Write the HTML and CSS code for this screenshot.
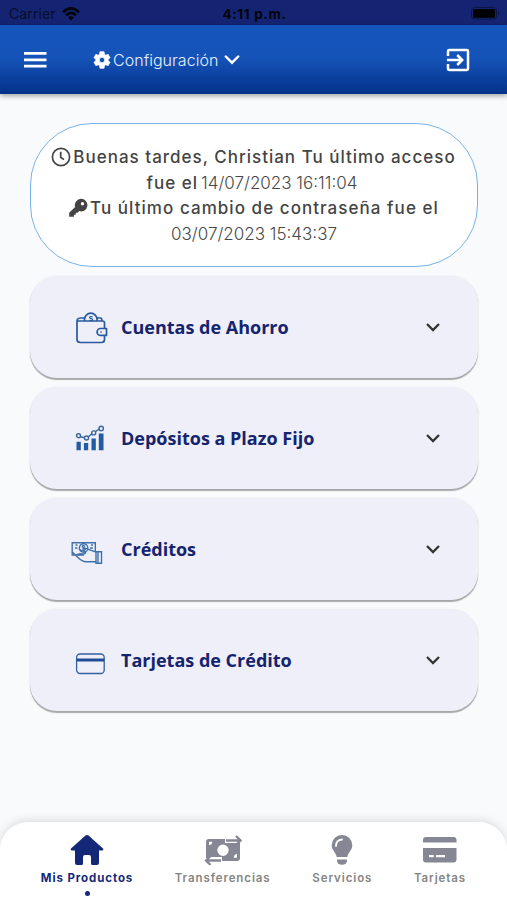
FILE: index.html
```html
<!DOCTYPE html>
<html lang="es">
<head>
<meta charset="utf-8">
<meta name="viewport" content="width=device-width, initial-scale=1">
<title>Mis Productos</title>
<link rel="stylesheet" href="styles.css">
</head>
<body>
<div class="app">
  <div class="status">
    <div class="carrier"><span>Carrier</span>
      <svg width="18" height="14" viewBox="0 0 18 14" fill="none" stroke="#02030a" stroke-width="2.6"><path d="M1 5.2Q9-2.6 17 5.2M4 8.2q5-4.6 10 0"/><path d="M9 13.4 6 10.4q3-2.4 6 0z" fill="#02030a" stroke="none"/></svg>
    </div>
    <span class="time">4:11 p.m.</span>
    <svg class="battery" width="29" height="13" viewBox="0 0 29 13"><rect x=".5" y=".5" width="25" height="11.5" rx="3" fill="none" stroke="#0b1545"/><rect x="2" y="2" width="22" height="8.8" rx="1.5" fill="#000"/><path d="M27 4q2 2.300 0 4.500z" fill="#0b1545"/></svg>
  </div>

  <header class="topbar">
    <svg class="menu" width="23" height="16" viewBox="0 0 23 16" fill="#fff"><path d="M0 0h22.500v2.800H0zM0 6.400h22.500v2.800H0zM0 12.800h22.500v2.800H0z"/></svg>
    <div class="config">
      <svg width="20" height="20" viewBox="0 0 24 24" fill="#fff"><path d="M19.400 13a7.500 7.500 0 0 0 0-2l2.300-1.700-2.400-4.200-2.700 1.100a7.500 7.500 0 0 0-1.700-1L14.500 2h-5l-.4 3.200a7.500 7.500 0 0 0-1.700 1L4.700 5.100 2.300 9.300 4.600 11a7.500 7.500 0 0 0 0 2l-2.300 1.700 2.400 4.200 2.700-1.100a7.500 7.500 0 0 0 1.700 1l.4 3.200h5l.4-3.200a7.500 7.500 0 0 0 1.700-1l2.700 1.100 2.400-4.200zM12 15.200a3.200 3.200 0 1 1 0-6.400 3.200 3.200 0 0 1 0 6.400z" fill-rule="evenodd" stroke="#fff" stroke-width=".8" stroke-linejoin="round"/></svg>
      <span class="config-label">Configuración</span>
      <svg width="16" height="10" viewBox="0 0 16 10" fill="none" stroke="#fff" stroke-width="2.400" stroke-linecap="round"><path d="m1.800 1.500 6.200 6.200 6.200-6.200"/></svg>
    </div>
    <svg class="exit" width="24" height="24" viewBox="0 0 24 24" fill="none" stroke="#fff" stroke-width="2.500"><path d="M2 8V3.200Q2 2 3.200 2h17.600Q22 2 22 3.200v17.600q0 1.200-1.200 1.200H3.200Q2 22 2 20.800V16M1 12h15M11.200 7l5 5-5 5"/></svg>
  </header>

  <main>
    <section class="greeting">
      <p><svg width="20" height="20" viewBox="0 0 20 20" fill="none" stroke="#444" stroke-width="1.700"><circle cx="10" cy="10" r="8.600"/><path d="M9.700 4.800v5.500l3.300 2.300"/></svg><b class="g1">Buenas tardes, Christian Tu último acceso</b></p>
      <p><b class="g2">fue el</b><span class="date d1">14/07/2023 16:11:04</span></p>
      <p><svg width="20" height="20" viewBox="0 0 20 20"><path fill="#444" fill-rule="evenodd" d="M13 .8a6.300 6.300 0 1 1-1.800 12.300l-1.500 1.600H7.800v2H5.900v2H1.200v-3.900l5.900-5.900A6.300 6.300 0 0 1 13 .8zm1.500 3.200a1.700 1.700 0 1 0 0 3.400 1.700 1.700 0 0 0 0-3.400z"/></svg><b class="g3">Tu último cambio de contraseña fue el</b></p>
      <p><span class="date d2">03/07/2023 15:43:37</span></p>
    </section>

    <section class="product">
      <svg class="picon" width="34" height="34" viewBox="0 -1 34 34" fill="none" stroke="#285a9e" stroke-width="1.700" stroke-linejoin="round"><path d="M29.500 17.500V12q0-2-2-2h-24M3.500 10Q1.500 9.500 2.500 8.200q1-1.200 3-1.200h4M2 9.500v19Q2 31.500 5.500 31.500h21q3 0 3-3v-4M22 7h3.500q1.500 0 1.500 3"/><path d="M9.500 10V8.500a6.300 6.300 0 0 1 12.600 0V10"/><path d="M31.500 17.500h-6a3.400 3.400 0 0 0 0 6.800h6z"/><path d="M25.500 21h1" stroke-width="1.800"/><path d="M17.600 5.900q-3-1-3 .6 0 1 1.500 1.200t1.500 1.100q0 1.400-3.200.5" stroke-width="1.200"/></svg>
      <h2 class="t1">Cuentas de Ahorro</h2>
      <svg class="chev" viewBox="0 0 16 10"><path d="m2 2 6 6 6-6"/></svg>
    </section>
    <section class="product">
      <svg class="picon" width="34" height="34" viewBox="0 0 34 34" fill="#245aa0"><path d="M1.500 20.700h4.300v8.500H1.500zM8.900 22h4.300v7.200H8.900zM16.500 17.500h4.300v11.700h-4.300zM23.800 12.500h4.700v16.700h-4.700z"/><g fill="none" stroke="#3a669f" stroke-width="1.400"><path d="m5.200 15.700 4.600 1.100M13.200 16l4.100-3.600M20.300 10.700l4-2.700"/><circle cx="3.500" cy="14.700" r="2"/><circle cx="11.500" cy="17" r="2"/><circle cx="18.700" cy="11.900" r="2"/><circle cx="26.200" cy="7.500" r="2.200"/></g></svg>
      <h2 class="t2">Depósitos a Plazo Fijo</h2>
      <svg class="chev" viewBox="0 0 16 10"><path d="m2 2 6 6 6-6"/></svg>
    </section>
    <section class="product">
      <svg class="picon picon-hand" width="34" height="34" viewBox="0 -2 34 34" fill="none" stroke="#4070ac" stroke-width="1.400"><path d="M14 21H2.200V8.700h23.100v9.500M2.200 18l5.500 5.300q4.600 4.500 8.300 4.500h10.200M6 21l4-1.300q4 .8 5.300-.5 1-1.200-1.300-2.200-3.500 0-5-2M26.200 18.200l-8-2.700q-3-2.500-5.500-.5"/><circle cx="13.600" cy="14" r="4.200"/><path d="M15.200 12.200q-2.800-1-2.800.5 0 1 1.500 1.200t1.500 1.200q0 1.300-3 .6M5 14h2.500M20 14h3M5.500 11h2M21 11h2" stroke-width="1.500"/><path d="M26 17.800h5.500v11.500H26zM28 18v11"/></svg>
      <h2 class="t3">Créditos</h2>
      <svg class="chev" viewBox="0 0 16 10"><path d="m2 2 6 6 6-6"/></svg>
    </section>
    <section class="product">
      <svg class="picon" width="34" height="34" viewBox="0 -2 34 34" fill="none" stroke="#31609f" stroke-width="1.300"><rect x="1.600" y="9" width="27.600" height="19.500" rx="3.500"/><path d="M2 15h27.200" stroke="#1d4b96" stroke-width="3"/></svg>
      <h2 class="t4">Tarjetas de Crédito</h2>
      <svg class="chev" viewBox="0 0 16 10"><path d="m2 2 6 6 6-6"/></svg>
    </section>
  </main>

  <nav class="tabs">
    <a class="tab tab-home">
      <svg width="34" height="30" viewBox="0 0 34 30" fill="#142878"><path d="M15.500.6q1.500-1.100 3 0L33 13.500q1 1.500-1 2h-3V28q0 2-2 2h-4.500q-1.500 0-1.500-1.500V22q0-2-2-2h-4q-2 0-2 2v6.500q0 1.500-1.500 1.500H7q-2 0-2-2V15.500H2q-2-.5-1-2z"/></svg>
      <span>Mis Productos</span><i class="dot"></i>
    </a>
    <a class="tab tab-transfer">
      <svg width="38" height="30" viewBox="0 0 38 30"><path fill="#858795" fill-rule="evenodd" d="M5 4h16v4h11.500V7.500H36V23q0 3-3 3H18v-4H6l-.5 1H2V7q0-3 3-3zm14 5.500a5.700 5.700 0 1 0 0 11.400 5.700 5.700 0 0 0 0-11.400zM5 6.800v3.400Q8 10 8.300 6.800zM33 19q-3 .2-3.300 3.800H33z"/><path d="M22 5.500h13M17 25.500H3" fill="none" stroke="#fff" stroke-width="5"/><path d="M22 5.500h14M32 1l4.500 4.500L32 10M17 25.500H2M6.500 21 2 25.500 6.500 30" fill="none" stroke="#858795" stroke-width="2.300"/></svg>
      <span>Transferencias</span>
    </a>
    <a class="tab tab-services">
      <svg width="22" height="30" viewBox="0 0 22 30"><path fill="#858795" d="M11 0a10.200 10.200 0 0 1 10.300 10.300c0 4.700-4 7-5 11.700H5.700c-1-4.700-5-7-5-11.700A10.200 10.200 0 0 1 11 0zM6 24.500h10v1.800q-1 3.500-5 3.500t-5-3.500z"/><path d="M5 11q0-6 6-6.500" fill="none" stroke="#fff" stroke-width="1.800" stroke-linecap="round"/></svg>
      <span>Servicios</span>
    </a>
    <a class="tab tab-cards">
      <svg width="34" height="30" viewBox="0 0 34 30"><path fill="#858795" fill-rule="evenodd" d="M0 7.500V5q0-3 3-3h27.500q3 0 3 3v2.500zM0 13h33.500v11.500q0 3-3 3H3q-3 0-3-3zm6 7v2.200h4.700V20zm7 0v2.200h9V20z"/></svg>
      <span>Tarjetas</span>
    </a>
  </nav>
</div>
</body>
</html>
```
FILE: styles.css
```css
* { box-sizing: border-box; }
body { margin: 0; font-family: Inter, sans-serif; }
.app { width: 507px; height: 900px; display: flex; flex-direction: column; background: #f8fafc; overflow: hidden; }
svg { display: block; flex: none; }

.status { height: 25px; background: #142472; display: grid; grid-template-columns: 1fr auto 1fr; align-items: center; padding: 2px 7px 0 9px; font: 14px Inter, sans-serif; color: #080d2c; }
.carrier { display: flex; align-items: center; gap: 6px; letter-spacing: .1px; }
.time { font-weight: 700; font-size: 13.5px; letter-spacing: .65px; color: #02030a; }
.battery { justify-self: end; }

.topbar { height: 69px; flex: none; display: flex; align-items: center; padding: 0 37px 0 24px; background: linear-gradient(#1555bd 0%, #1553b8 48%, #04318a 100%); box-shadow: 0 2px 5px rgba(0,0,0,.35); z-index: 1; }
.config { display: flex; align-items: center; margin-left: 45px; color: #e7efff; }
.config-label { font: 300 16px Inter, sans-serif; margin: 0 6px 0 1px; white-space: nowrap; letter-spacing: .03px; }
.exit { margin-left: auto; }

main { flex: 1; padding: 29px 29px 0 30px; }
.greeting { height: 144px; border: 1.5px solid #78b2e8; border-radius: 62px; background: #fff; padding-top: 20px; margin-bottom: 9px; color: #444; }
.greeting p { height: 25.700px; margin: 0; display: flex; align-items: center; justify-content: center; white-space: nowrap; }
.greeting svg { margin-right: 2px; }
.greeting b { font: 500 17px Inter, sans-serif; letter-spacing: 1px; margin-right: 1px; }
.greeting .g3 { letter-spacing: 1.050px; }
.greeting .date { font: 300 17px Inter, sans-serif; color: #484848; }
.greeting .g2 { margin-right: 3px; }
.greeting .d1 { margin-right: 4px; }

.product { height: 102px; margin-bottom: 9px; border-radius: 27px; background: #efeff9; box-shadow: 0 1.500px 1px rgba(0,0,0,.32), 0 0 3px rgba(0,0,0,.05); display: flex; align-items: center; padding: 0 37px 0 45px; }
.picon { margin-right: 12px; }
.picon-hand { margin: 0 17px 0 -5px; }
.product h2 { margin: 0; font: 700 18px "Open Sans", sans-serif; color: #14246f; white-space: nowrap; }
.chev { width: 16px; height: 10px; margin-left: auto; fill: none; stroke: #333; stroke-width: 2.300; }

.tabs { height: 78px; flex: none; display: flex; justify-content: space-between; background: #fff; border-radius: 28px 28px 0 0; box-shadow: 0 -2px 10px rgba(0,0,0,.12); padding: 13px 41px 0; }
.tab { display: flex; flex-direction: column; align-items: center; color: #858585; font: 600 11.500px/16px Inter, sans-serif; letter-spacing: .9px; white-space: nowrap; }
.tab span { margin-top: 5px; }
.tab-home { width: 92px; color: #142878; font-weight: 700; }
.tab-transfer { width: 96px; }
.tab-services { width: 60px; }
.tab-cards { width: 52px; }
.dot { width: 5px; height: 5px; border-radius: 50%; background: #142878; margin-top: 5px; }
```
